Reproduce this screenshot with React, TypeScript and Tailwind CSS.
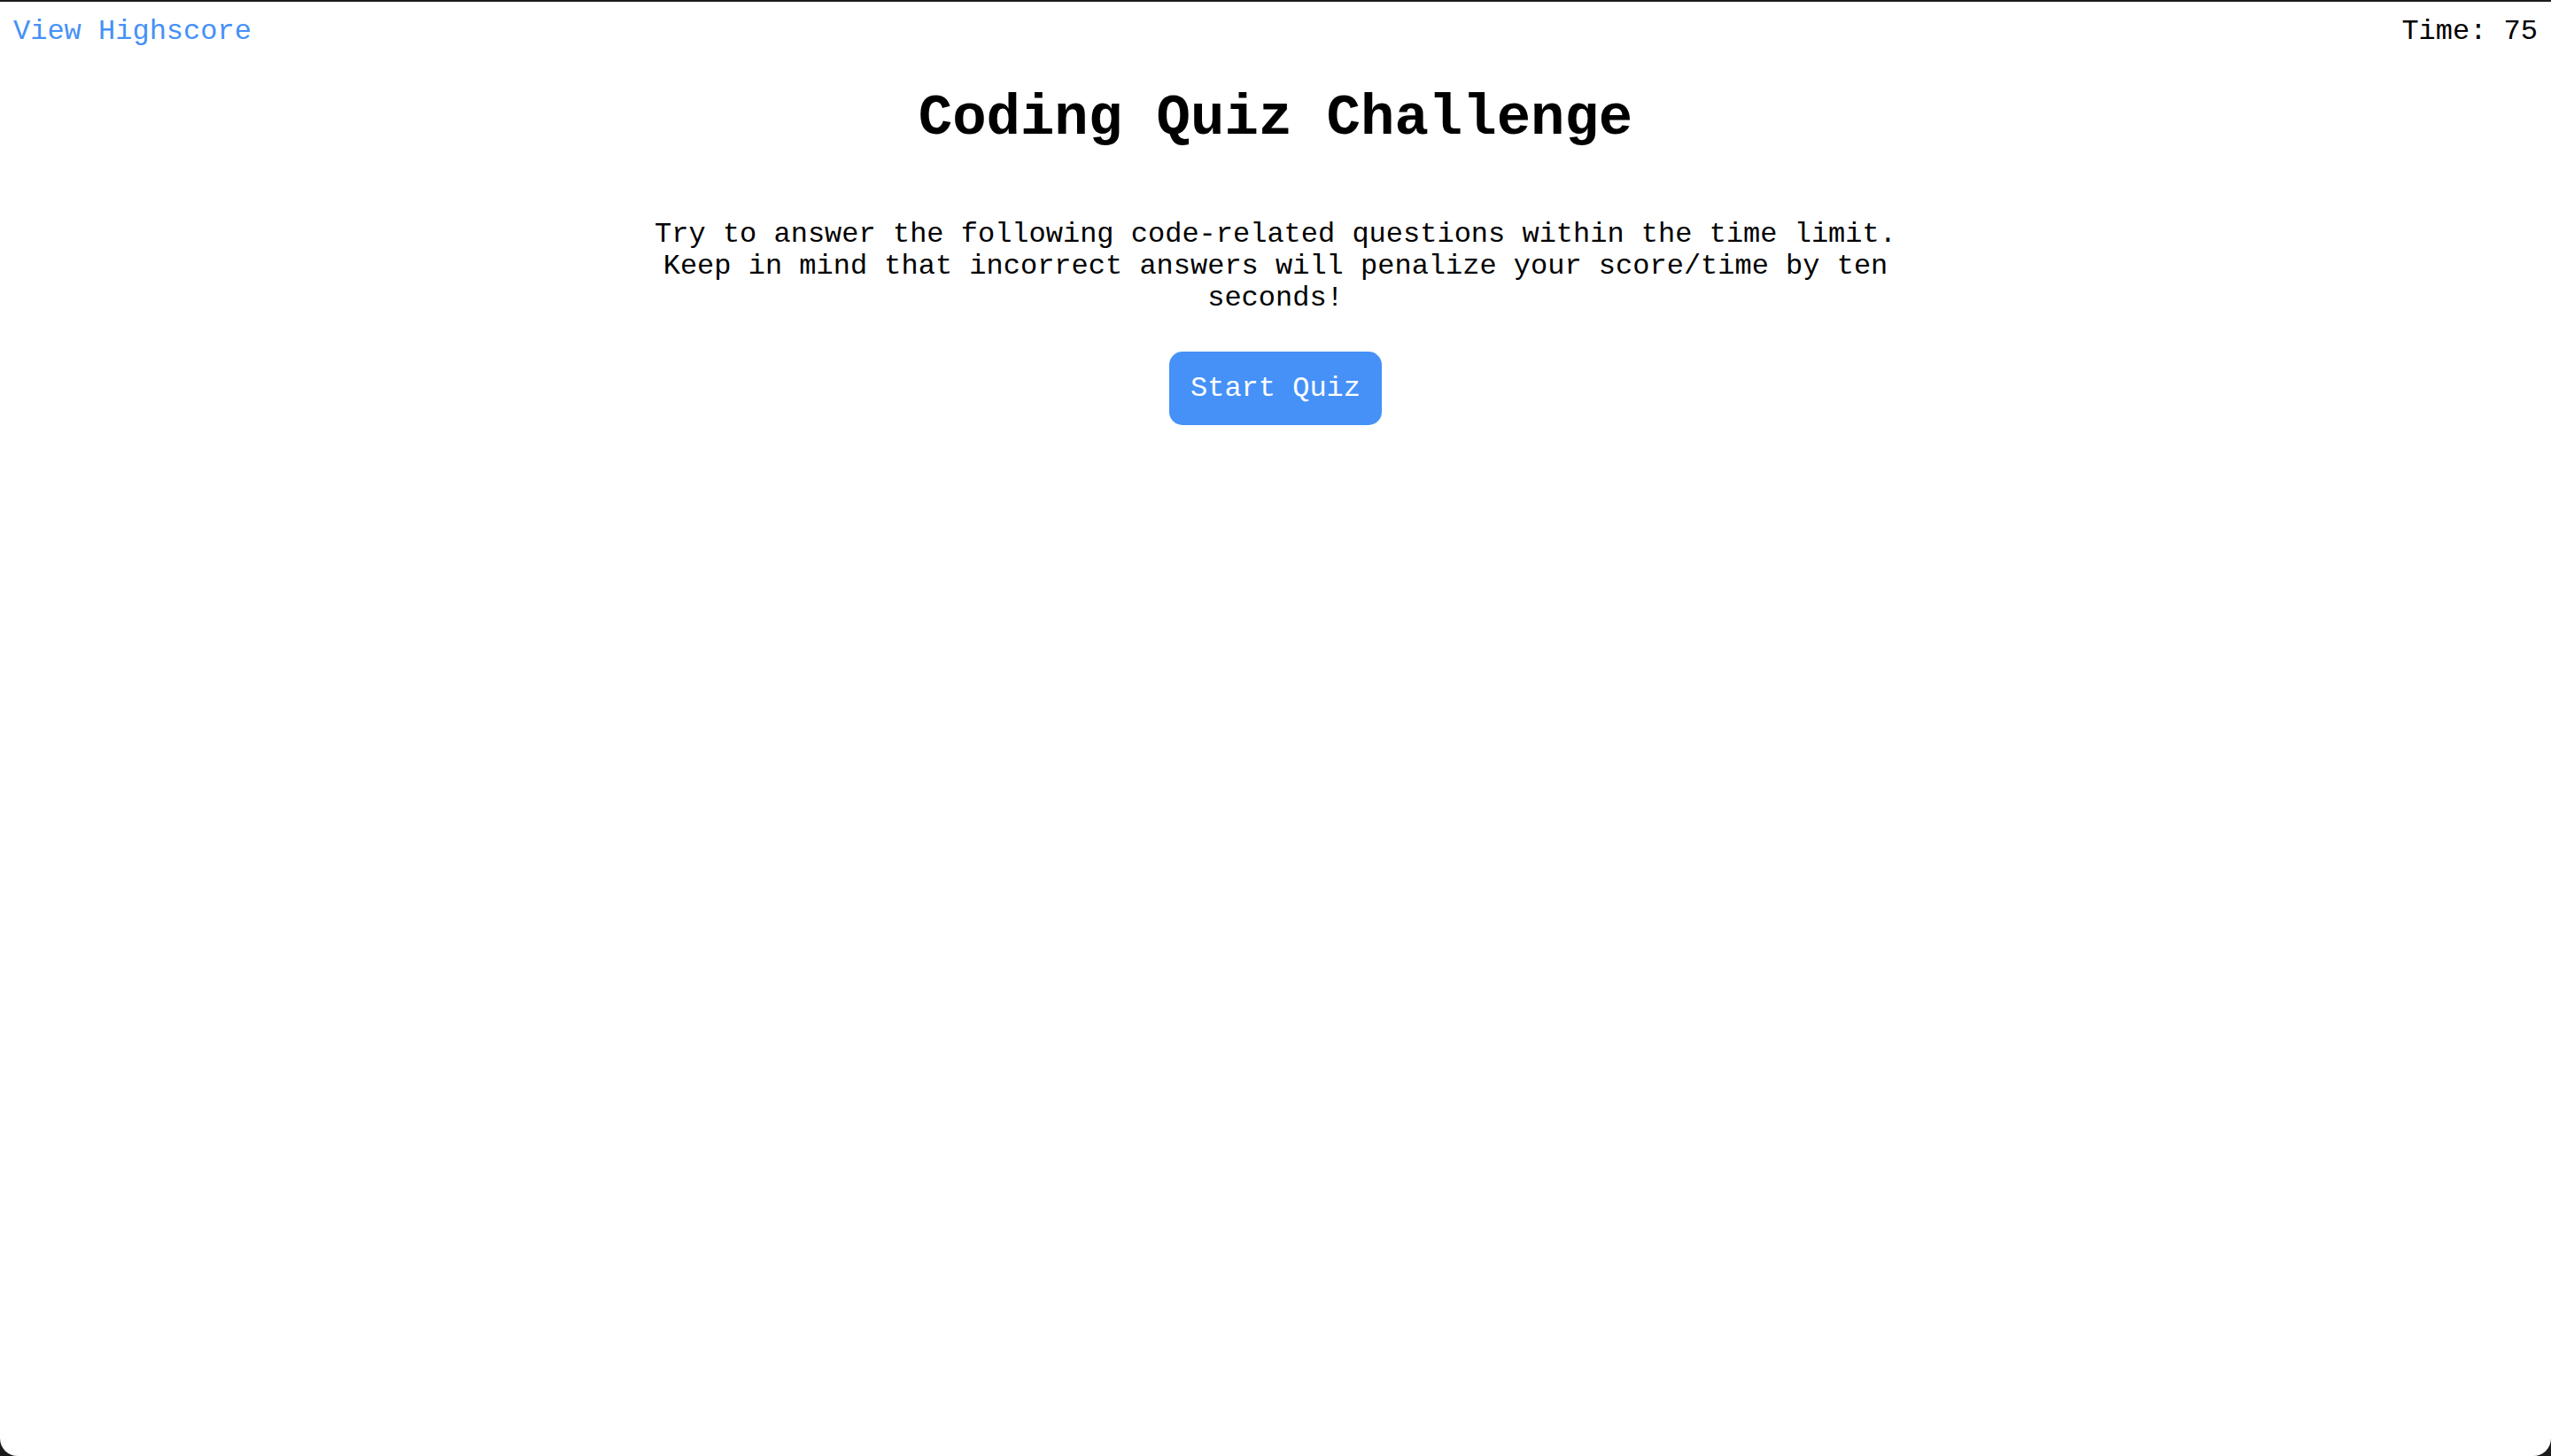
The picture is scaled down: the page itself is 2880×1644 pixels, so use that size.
import React from 'react';

export default function App() {
  return (
    <div className="h-screen bg-[#1c1c1c] pt-[2px] flex flex-col" style={{ fontFamily: '"Liberation Mono", "Courier New", monospace' }}>
      <div className="flex-1 bg-white rounded-b-[20px] flex flex-col">
        {/* Header */}
        <header className="flex justify-between items-center px-[15px] pt-[16px] text-[32px] leading-[36px]">
          <a href="#" className="text-[#4591f7]">View Highscore</a>
          <span className="text-black">Time: 75</span>
        </header>

        {/* Intro */}
        <main className="flex flex-col items-center text-black">
          <h1 className="mt-[44px] text-[64px] leading-[72px] font-bold">Coding Quiz Challenge</h1>
          <p className="mt-[77px] w-[1440px] text-center text-[32px] leading-[36px]">
            Try to answer the following code-related questions within the time limit. Keep in mind that incorrect answers will penalize your score/time by ten seconds!
          </p>
          <button className="mt-[42px] h-[83px] px-[24px] rounded-[15px] bg-[#4591f7] text-white text-[32px] leading-[36px]">
            Start Quiz
          </button>
        </main>
      </div>
    </div>
  );
}
